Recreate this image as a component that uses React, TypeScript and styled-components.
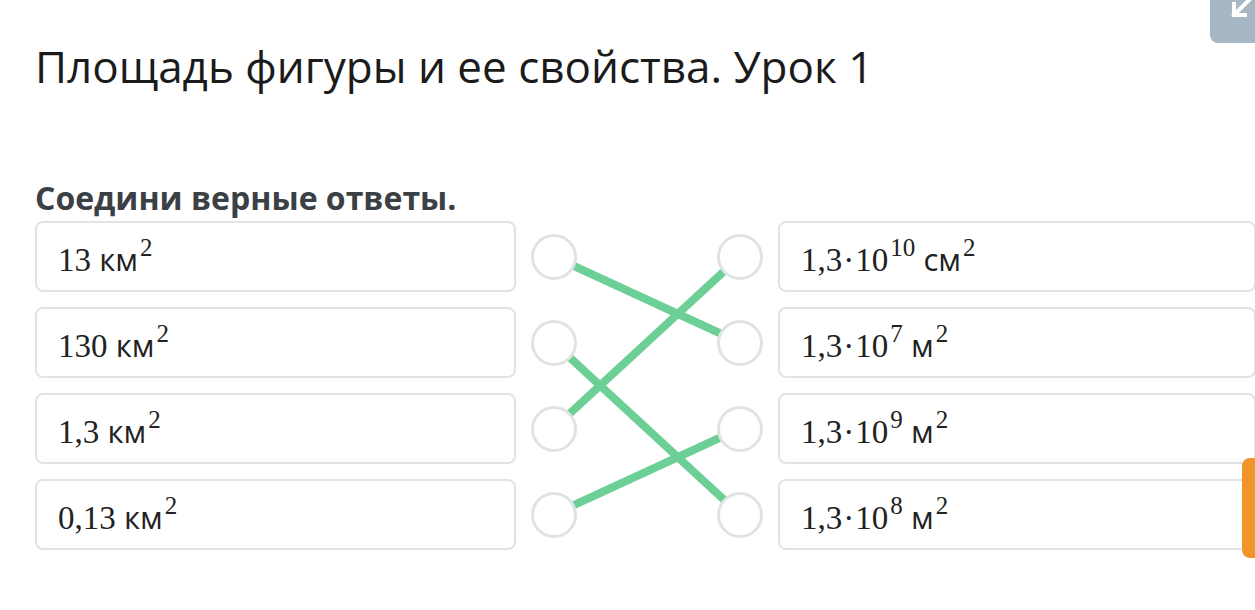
import React from "react";
import styled, { createGlobalStyle } from "styled-components";

const GlobalStyle = createGlobalStyle`
  html, body { margin: 0; padding: 0; background: #ffffff; }
  body { font-family: "Open Sans", "Liberation Sans", sans-serif; }
`;

const Page = styled.div`
  position: relative;
  width: 1255px;
  height: 610px;
  overflow: hidden;
  box-sizing: border-box;
  padding: 36px 0 0 35px;
  background: #ffffff;
`;

const Title = styled.h1`
  margin: 0;
  font-family: "Open Sans", sans-serif;
  font-weight: 400;
  font-size: 44px;
  line-height: 60px;
  color: #1b1b1b;
  white-space: nowrap;
`;

const Question = styled.h2`
  margin: 80px 0 0 0;
  font-family: "Open Sans", sans-serif;
  font-weight: 700;
  font-size: 32px;
  line-height: 43px;
  color: #3b4045;
  white-space: nowrap;
`;

const Match = styled.div`
  margin-top: 2px;
  display: grid;
  grid-template-columns: 481px 262px 478px;
  align-items: start;
`;

const List = styled.div`
  display: flex;
  flex-direction: column;
  gap: 15px;
`;

const Card = styled.div`
  box-sizing: border-box;
  height: 71px;
  border: 2px solid #e1e4e5;
  border-radius: 8px;
  background: #ffffff;
  padding: 0 0 0 21px;
  display: flex;
  align-items: center;
`;

const Text = styled.span`
  font-family: "Liberation Serif", serif;
  font-size: 33px;
  line-height: 40px;
  color: #222222;
  white-space: nowrap;
  padding-top: 5px;
`;

const Unit = styled.span`
  font-family: "Open Sans", sans-serif;
  font-size: 31px;
`;

const Sup = styled.sup`
  font-family: "Liberation Serif", serif;
  font-size: 25px;
  vertical-align: 15px;
  line-height: 0;
  margin-left: 2px;
`;

const Dot = styled.span`
  margin: 0 1px;
`;

const Connector = styled.div`
  position: relative;
  display: flex;
  justify-content: space-between;
  padding: 0 15px;
`;

const Lines = styled.svg`
  position: absolute;
  left: 0;
  top: 0;
  width: 262px;
  height: 329px;
  z-index: 0;
`;

const Column = styled.div`
  position: relative;
  z-index: 1;
  display: flex;
  flex-direction: column;
  gap: 15px;
`;

const Slot = styled.div`
  height: 71px;
  display: flex;
  align-items: center;
`;

const Circle = styled.div`
  box-sizing: border-box;
  width: 46px;
  height: 46px;
  border-radius: 50%;
  border: 3px solid #dfe3e3;
  background: #ffffff;
`;

const CornerButton = styled.div`
  position: absolute;
  top: -10px;
  left: 1210px;
  width: 60px;
  height: 53px;
  border-radius: 8px;
  background: #a7b8c4;
  overflow: hidden;
`;

const SideTab = styled.div`
  position: absolute;
  top: 458px;
  left: 1242px;
  width: 24px;
  height: 100px;
  border-radius: 8px;
  background: #f0952a;
`;

type Val = { base: string; exp?: string; unit: string };

const left: Val[] = [
  { base: "13", unit: "км" },
  { base: "130", unit: "км" },
  { base: "1,3", unit: "км" },
  { base: "0,13", unit: "км" },
];

const right: Val[] = [
  { base: "1,3", exp: "10", unit: "см" },
  { base: "1,3", exp: "7", unit: "м" },
  { base: "1,3", exp: "9", unit: "м" },
  { base: "1,3", exp: "8", unit: "м" },
];

const Value = ({ v }: { v: Val }) => (
  <Text>
    {v.base}
    {v.exp ? (
      <>
        <Dot>·</Dot>10<Sup>{v.exp}</Sup>
      </>
    ) : null}{" "}
    <Unit>{v.unit}</Unit>
    <Sup>2</Sup>
  </Text>
);

const rowY = (i: number) => 35.5 + i * 86;
const LX = 37.5;
const RX = 224;
const pairs: [number, number][] = [
  [0, 1],
  [1, 3],
  [2, 0],
  [3, 2],
];

export default function App() {
  return (
    <>
      <GlobalStyle />
      <Page>
        <Title>Площадь фигуры и ее свойства. Урок 1</Title>
        <Question>Соедини верные ответы.</Question>
        <Match>
          <List>
            {left.map((v, i) => (
              <Card key={i}>
                <Value v={v} />
              </Card>
            ))}
          </List>
          <Connector>
            <Lines viewBox="0 0 262 329">
              {pairs.map(([a, b], i) => (
                <line
                  key={i}
                  x1={LX}
                  y1={rowY(a)}
                  x2={RX}
                  y2={rowY(b)}
                  stroke="#6cd096"
                  strokeWidth={8}
                />
              ))}
            </Lines>
            <Column>
              {left.map((_, i) => (
                <Slot key={i}>
                  <Circle />
                </Slot>
              ))}
            </Column>
            <Column>
              {right.map((_, i) => (
                <Slot key={i}>
                  <Circle />
                </Slot>
              ))}
            </Column>
          </Connector>
          <List>
            {right.map((v, i) => (
              <Card key={i}>
                <Value v={v} />
              </Card>
            ))}
          </List>
        </Match>
        <CornerButton>
          <svg width="60" height="53" viewBox="0 0 60 53">
            <path
              d="M24 14 L24 25 L35 25 M24 25 L42 7"
              stroke="#ffffff"
              strokeWidth="4"
              fill="none"
              strokeLinecap="square"
            />
          </svg>
        </CornerButton>
        <SideTab />
      </Page>
    </>
  );
}
